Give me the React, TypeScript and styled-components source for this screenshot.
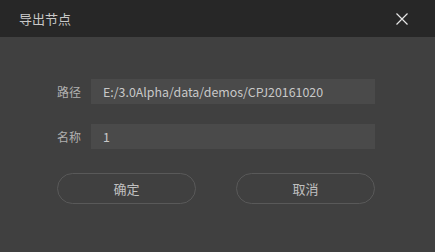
import styled, { createGlobalStyle } from "styled-components";

const GlobalStyle = createGlobalStyle`
  html, body {
    margin: 0;
    padding: 0;
    background: #404040;
  }
  * {
    box-sizing: border-box;
  }
`;

const FONT = `"Noto Sans CJK SC", "Open Sans", sans-serif`;

export default function App() {
  return (
    <>
      <GlobalStyle />
      <Dialog>
        <Header>
          <Title>导出节点</Title>
          <CloseButton aria-label="close">
            <svg width="12" height="12" viewBox="0 0 12 12">
              <path d="M0.5 0.5 L11.5 11.5 M11.5 0.5 L0.5 11.5" stroke="#e6e6e6" strokeWidth="1.2" />
            </svg>
          </CloseButton>
        </Header>
        <Body>
          <Field>
            <Label>路径</Label>
            <Input readOnly value="E:/3.0Alpha/data/demos/CPJ20161020" />
          </Field>
          <Field>
            <Label>名称</Label>
            <Input readOnly value="1" />
          </Field>
          <Actions>
            <ActionButton>确定</ActionButton>
            <ActionButton>取消</ActionButton>
          </Actions>
        </Body>
      </Dialog>
    </>
  );
}

const Dialog = styled.div`
  width: 435px;
  height: 252px;
  background: #404040;
  display: flex;
  flex-direction: column;
  font-family: ${FONT};
`;

const Header = styled.div`
  height: 37px;
  background: #272727;
  display: flex;
  align-items: center;
  justify-content: space-between;
  padding: 0 27px 0 19px;
`;

const Title = styled.div`
  font-size: 13px;
  color: #c8c8c8;
`;

const CloseButton = styled.div`
  width: 12px;
  height: 12px;
  display: flex;
  margin-top: 1px;
`;

const Body = styled.div`
  display: flex;
  flex-direction: column;
  padding: 42px 60px 0 57px;
`;

const Field = styled.div`
  display: flex;
  align-items: center;
  height: 25px;
  margin-bottom: 20px;
`;

const Label = styled.div`
  width: 34px;
  font-size: 12px;
  color: #b0b0b0;
`;

const Input = styled.input`
  flex: 1;
  height: 25px;
  border: none;
  outline: none;
  background: #4a4a4a;
  color: #c8c8c8;
  font-family: ${FONT};
  font-size: 12.4px;
  padding: 0 12px;
`;

const Actions = styled.div`
  display: flex;
  justify-content: space-between;
  margin-top: 4px;
`;

const ActionButton = styled.button`
  width: 139px;
  height: 31px;
  border: 1px solid #595959;
  border-radius: 16px;
  background: transparent;
  color: #c0c0c0;
  font-family: ${FONT};
  font-size: 13px;
  padding: 0;
`;
